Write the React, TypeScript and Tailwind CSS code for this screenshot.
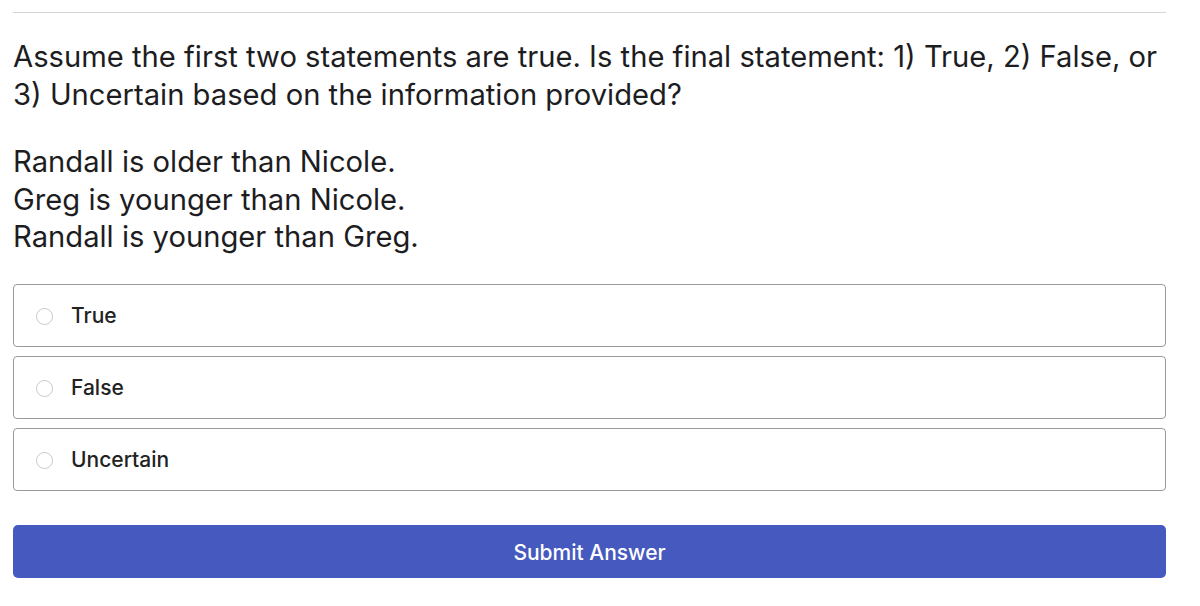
import React from "react";

const options = ["True", "False", "Uncertain"];

export default function App() {
  return (
    <div className="w-[1200px] h-[606px] bg-white px-[13px] pt-[12px] text-[#1d1d1f]" style={{ fontFamily: 'Inter, "Noto Sans", sans-serif' }}>
      <div className="w-[1153px] border-t border-[#d4d4d4]" />
      <p className="mt-[25px] text-[29.2px] leading-[38px]">
        Assume the first two statements are true. Is the final statement: 1) True, 2) False, or 3) Uncertain based on the information provided?
      </p>
      <div className="mt-[29px] text-[29.2px] leading-[37.5px]">
        <div>Randall is older than Nicole.</div>
        <div>Greg is younger than Nicole.</div>
        <div>Randall is younger than Greg.</div>
      </div>
      <div className="mt-[28px] flex w-[1153px] flex-col gap-[9px]">
        {options.map((o) => (
          <label key={o} className="flex h-[63px] items-center rounded-[4px] border-[1.5px] border-[#9a9a9a] pl-[22px] pt-[2px]">
            <span className="h-[17px] w-[17px] rounded-full border border-[#c8c8c8] bg-white" />
            <span className="ml-[18px] text-[21px] font-medium text-[#222]">{o}</span>
          </label>
        ))}
      </div>
      <button className="mt-[34px] flex h-[53px] w-[1153px] items-center justify-center rounded-[5px] bg-[#4659bf] pt-[3px] text-[21px] font-medium text-white">
        Submit Answer
      </button>
    </div>
  );
}
